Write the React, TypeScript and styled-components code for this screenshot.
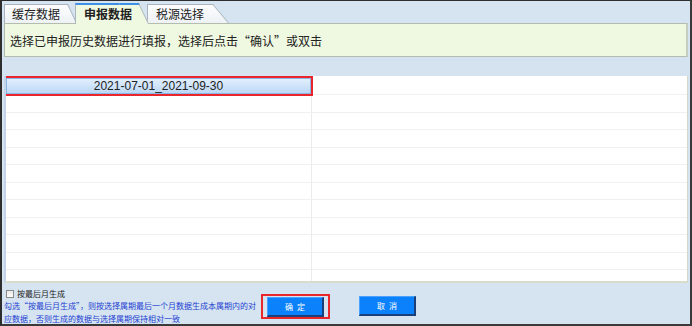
import React from "react";
import styled, { createGlobalStyle, css } from "styled-components";

const GlobalStyle = createGlobalStyle`
  html, body {
    margin: 0;
    padding: 0;
    background: #ffffff;
  }
  body {
    font-family: "Noto Sans CJK SC", "Liberation Sans", sans-serif;
  }
`;

const Frame = styled.div`
  box-sizing: border-box;
  width: 692px;
  height: 326px;
  display: flex;
  flex-direction: column;
  padding: 2px 2px 0 2px;
  background: #d6e4f1;
  border-left: 2px solid #2e2e2e;
  border-top: 1px solid #2e2e2e;
  border-right: 2px solid #3a3a3a;
  border-bottom: 2px solid #3a3a3a;
  overflow: hidden;

  & > * {
    flex-shrink: 0;
  }
`;

const TabBar = styled.div`
  display: flex;
  height: 20px;
  position: relative;
  z-index: 2;
`;

interface TabProps {
  $active?: boolean;
  $width: number;
  $slant: number;
}

const tabFace = (active?: boolean) =>
  active
    ? css`
        background: #eff8e1;
        border-top: 2px solid #3e8fe6;
      `
    : css`
        background: linear-gradient(#fdfdfe, #eef2f5);
        border-top: 1px solid #aab4bf;
      `;

const Tab = styled.div<TabProps>`
  position: relative;
  box-sizing: border-box;
  width: ${(p) => p.$width}px;
  height: ${(p) => (p.$active ? 21 : 19)}px;
  margin-top: ${(p) => (p.$active ? 0 : 1)}px;
  margin-left: -2px;
  padding-left: 9px;
  font-size: 12px;
  line-height: ${(p) => (p.$active ? 22 : 19)}px;
  color: #222;
  font-weight: ${(p) => (p.$active ? 700 : 400)};
  z-index: ${(p) => (p.$active ? 3 : 1)};
  white-space: nowrap;

  &:first-child {
    margin-left: 0;
    padding-left: 8px;
  }

  &::before {
    content: "";
    position: absolute;
    top: 0;
    bottom: 0;
    left: 0;
    right: ${(p) => p.$slant * 2}px;
    box-sizing: border-box;
    border-left: 1px solid #aab4bf;
    ${(p) => tabFace(p.$active)};
    z-index: -1;
  }

  &::after {
    content: "";
    position: absolute;
    top: 0;
    bottom: 0;
    right: 0;
    width: ${(p) => p.$slant * 2}px;
    box-sizing: border-box;
    border-right: 1px solid #aab4bf;
    ${(p) => tabFace(p.$active)};
    transform-origin: bottom right;
    transform: skewX(${(p) => (Math.atan(p.$slant / (p.$active ? 21 : 19)) * 180) / Math.PI}deg);
    z-index: -1;
  }
`;

const InfoBox = styled.div`
  box-sizing: border-box;
  height: 34px;
  display: flex;
  align-items: center;
  padding: 1px 0 0 5px;
  background: #eff8e0;
  border: 1px solid #b4bcae;
  border-right: 2px solid #c6ccbf;
  font-size: 12px;
  color: #222;
  position: relative;
  z-index: 1;
`;

const GridHeader = styled.div`
  height: 19px;
  background: #d5e3f1;
`;

const GridBody = styled.div`
  box-sizing: border-box;
  height: 207px;
  display: grid;
  grid-template-columns: 306px 1fr;
  grid-template-rows: 19px;
  grid-auto-rows: 17.5px;
  align-content: start;
  background: #ffffff;
  border-left: 2px solid #c3d4e8;
  border-right: 1px solid #d3d8c9;
  border-bottom: 2px solid #d8dccd;
  overflow: hidden;
`;

const Cell = styled.div<{ $last?: boolean }>`
  box-sizing: border-box;
  border-bottom: 1px solid #f0f0f0;
  border-right: ${(p) => (p.$last ? "none" : "1px solid #ececec")};
  display: flex;
  padding: 2px 0 0 0;
`;

const SelectedCell = styled.div`
  flex: 1;
  box-sizing: border-box;
  display: flex;
  align-items: center;
  justify-content: center;
  background: linear-gradient(#e2effd, #bcd8f7);
  border: 1px solid #8cb6e6;
  outline: 2px solid #e8262b;
  outline-offset: 0;
  font-family: "Liberation Sans", sans-serif;
  font-size: 12px;
  color: #222;
  position: relative;
  z-index: 1;
`;

const Footer = styled.div`
  flex: 1;
  min-height: 0;
  display: flex;
  align-items: flex-start;
`;

const Note = styled.div`
  width: 255px;
  padding: 6px 0 0 1px;
  box-sizing: border-box;
`;

const CheckRow = styled.label`
  display: flex;
  align-items: center;
  gap: 3px;
  height: 10px;
  padding-left: 1px;
  font-size: 8px;
  line-height: 10px;
  color: #222;
`;

const CheckBox = styled.span`
  display: inline-block;
  box-sizing: border-box;
  width: 8px;
  height: 8px;
  border: 1px solid #8a8a8a;
  background: linear-gradient(#e9e9e9, #ffffff);
`;

const Hint = styled.p`
  margin: 0 0 0 -1px;
  font-size: 8px;
  line-height: 13px;
  color: #1d3fd2;
`;

const Highlight = styled.div`
  margin: 11px 0 0 2px;
  border: 2px solid #e8262b;
  padding: 1px 4px 0 4px;
  display: flex;
`;

const ActionButton = styled.button<{ $gap?: number }>`
  box-sizing: border-box;
  width: 57px;
  height: 20px;
  margin: ${(p) => (p.$gap ? `13px 0 0 ${p.$gap}px` : "0")};
  padding: 0;
  background: #0b82fc;
  border: 1px solid #4aa0ff;
  border-right: 2px solid #1c3f7a;
  border-bottom: 2px solid #1c3f7a;
  color: #ffffff;
  font-family: "Noto Sans CJK SC", sans-serif;
  font-size: 8px;
  letter-spacing: 4px;
  text-indent: 4px;
  line-height: 16px;
`;

const rows = Array.from({ length: 12 }, (_, i) => i);

export default function App() {
  return (
    <>
      <GlobalStyle />
      <Frame>
        <TabBar>
          <Tab $width={73} $slant={9}>缓存数据</Tab>
          <Tab $width={74} $slant={10} $active>
            申报数据
          </Tab>
          <Tab $width={82} $slant={16}>税源选择</Tab>
        </TabBar>
        <InfoBox>选择已申报历史数据进行填报，选择后点击“确认”或双击</InfoBox>
        <GridHeader />
        <GridBody>
          {rows.map((r) => (
            <React.Fragment key={r}>
              <Cell>{r === 0 && <SelectedCell>2021-07-01_2021-09-30</SelectedCell>}</Cell>
              <Cell $last />
            </React.Fragment>
          ))}
        </GridBody>
        <Footer>
          <Note>
            <CheckRow>
              <CheckBox />
              按最后月生成
            </CheckRow>
            <Hint>
              勾选“按最后月生成”，则按选择属期最后一个月数据生成本属期内的对应数据，否则生成的数据与选择属期保持相对一致
            </Hint>
          </Note>
          <Highlight>
            <ActionButton>确定</ActionButton>
          </Highlight>
          <ActionButton $gap={29}>取消</ActionButton>
        </Footer>
      </Frame>
    </>
  );
}
